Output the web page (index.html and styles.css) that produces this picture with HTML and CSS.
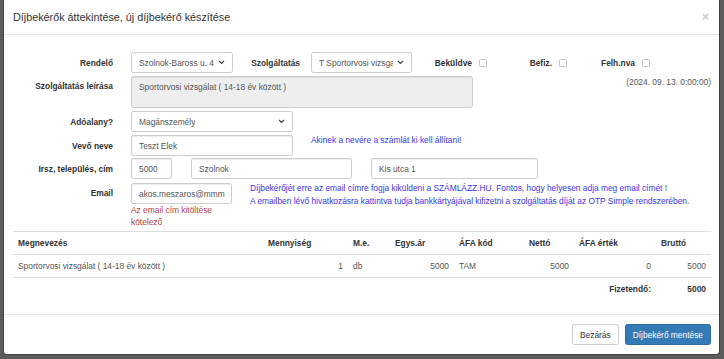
FILE: index.html
```html
<!DOCTYPE html>
<html lang="hu">
<head>
    <meta charset="UTF-8">
    <title>Díjbekérők</title>
    <link rel="stylesheet" href="styles.css">
</head>
<body>
<div class="modal">
    <div class="modal-header">
        <h4 class="modal-title">Díjbekérők áttekintése, új díjbekérő készítése</h4>
        <span class="close">×</span>
    </div>
    <div class="modal-body">
        <div class="form-row row-top">
            <label class="lbl">Rendelő</label>
            <div class="select w-rendelo"><span>Szolnok-Baross u. 4</span><svg width="7" height="5" viewBox="0 0 7 5"><path d="M1 1l2.5 2.5L6 1" fill="none" stroke="#444" stroke-width="1.2"/></svg></div>
            <label class="lbl lbl-szolg">Szolgáltatás</label>
            <div class="select w-szolg"><span>T Sportorvosi vizsga</span><svg width="7" height="5" viewBox="0 0 7 5"><path d="M1 1l2.5 2.5L6 1" fill="none" stroke="#444" stroke-width="1.2"/></svg></div>
            <label class="lbl lbl-bekuldve">Beküldve</label><span class="check"></span>
            <label class="lbl lbl-befiz">Befiz.</label><span class="check"></span>
            <label class="lbl lbl-felh">Felh.nva</label><span class="check"></span>
        </div>

        <div class="form-row row-leiras">
            <label class="lbl">Szolgáltatás leírása</label>
            <div class="textarea">Sportorvosi vizsgálat ( 14-18 év között )</div>
            <span class="date">(2024. 09. 13. 0:00:00)</span>
        </div>

        <div class="form-row">
            <label class="lbl">Adóalany?</label>
            <div class="select w-wide"><span>Magánszemély</span><svg width="7" height="5" viewBox="0 0 7 5"><path d="M1 1l2.5 2.5L6 1" fill="none" stroke="#444" stroke-width="1.2"/></svg></div>
        </div>

        <div class="form-row row-vevo">
            <label class="lbl">Vevő neve</label>
            <div class="input w-wide">Teszt Elek</div>
            <span class="hint hint-vevo">Akinek a nevére a számlát ki kell állítani!</span>
        </div>

        <div class="form-row">
            <label class="lbl">Irsz, település, cím</label>
            <div class="input w-irsz">5000</div>
            <div class="input w-telep">Szolnok</div>
            <div class="input w-cim">Kis utca 1</div>
        </div>

        <div class="form-row row-email">
            <label class="lbl">Email</label>
            <div class="email-col">
                <div class="input w-email">akos.meszaros@mmm</div>
                <div class="error">Az email cím kitöltése kötelező</div>
            </div>
            <div class="hint hint-email">
                Díjbekérőjét erre az email címre fogja kiküldeni a SZÁMLÁZZ.HU. Fontos, hogy helyesen adja meg email címét !<br>
                A emailben lévő hivatkozásra kattintva tudja bankkártyájával kifizetni a szolgáltatás díját az OTP Simple rendszerében.
            </div>
        </div>

        <table class="items">
            <colgroup>
                <col style="width:250px"><col style="width:85px"><col style="width:42px"><col style="width:64px">
                <col style="width:70px"><col style="width:50px"><col style="width:82px"><col style="width:55px">
            </colgroup>
            <thead>
            <tr>
                <th>Megnevezés</th>
                <th>Mennyiség</th>
                <th>M.e.</th>
                <th>Egys.ár</th>
                <th>ÁFA kód</th>
                <th>Nettó</th>
                <th>ÁFA érték</th>
                <th>Bruttó</th>
            </tr>
            </thead>
            <tbody>
            <tr>
                <td>Sportorvosi vizsgálat ( 14-18 év között )</td>
                <td class="num">1</td>
                <td>db</td>
                <td class="num">5000</td>
                <td>TAM</td>
                <td class="num">5000</td>
                <td class="num">0</td>
                <td class="num">5000</td>
            </tr>
            <tr class="total">
                <td colspan="6"></td>
                <td class="num">Fizetendő:</td>
                <td class="num">5000</td>
            </tr>
            </tbody>
        </table>
    </div>
    <div class="modal-footer">
        <span class="btn btn-default">Bezárás</span>
        <span class="btn btn-primary">Díjbekérő mentése</span>
    </div>
</div>
</body>
</html>
```

FILE: styles.css
```css
html, body{
    margin: 0;
    height: 100%;
}
body{
    background-color: #5c5c5c;
    font: 8.4px/12px "Liberation Sans", Arial, sans-serif;
    color: #333;
    padding: 0 4px 0 3px;
    box-sizing: border-box;
}

.modal{
    background-color: #fff;
    height: 355px;
    border: 1px solid #444;
    border-top: 0;
    border-radius: 0 0 4px 4px;
    box-sizing: border-box;
    display: flex;
    flex-direction: column;
}

.modal-header{
    height: 35px;
    padding: 0 9px;
    border-bottom: 1px solid #e5e5e5;
    box-sizing: border-box;
    display: flex;
    align-items: center;
    justify-content: space-between;
}
.modal-title{
    margin: 0;
    font-size: 10.8px;
    font-weight: normal;
    line-height: 15px;
}
.close{
    font-size: 12.6px;
    font-weight: bold;
    color: #000;
    opacity: 0.2;
    margin-right: 1px;
}

.modal-body{
    flex: 1;
    padding: 17px 9px 0 9px;
}

.form-row{
    display: flex;
    align-items: center;
    margin-bottom: 3px;
}
.lbl{
    width: 100px;
    margin-right: 18px;
    text-align: right;
    font-weight: bold;
    flex-shrink: 0;
}

.select, .input, .textarea{
    height: 21px;
    border: 1px solid #ccc;
    border-radius: 2.4px;
    box-sizing: border-box;
    padding: 0 7px;
    color: #555;
    display: flex;
    align-items: center;
    white-space: nowrap;
    overflow: hidden;
    box-shadow: inset 0 1px 1px rgba(0, 0, 0, 0.075);
    flex-shrink: 0;
}
.select{
    justify-content: space-between;
    box-shadow: none;
}
.select span{
    overflow: hidden;
    margin-right: 4px;
}
.select svg{
    flex-shrink: 0;
}

.w-rendelo{ width: 102px; }
.w-szolg{ width: 101px; }
.w-wide{ width: 162px; }
.w-irsz{ width: 41px; }
.w-telep{ width: 161px; margin-left: 19px; }
.w-cim{ width: 167px; margin-left: 19px; }
.w-email{ width: 101px; }

.lbl-szolg{ width: 67px; margin: 0 11px 0 0; }
.lbl-bekuldve{ width: 60px; margin: 0 7px 0 0; }
.lbl-befiz{ width: 65px; margin: 0 7px 0 0; }
.lbl-felh{ width: 68px; margin: 0 7px 0 0; }

.check{
    width: 8px;
    height: 8px;
    border: 1px solid #c4c4c4;
    border-radius: 1.5px;
    box-sizing: border-box;
    flex-shrink: 0;
}

.row-leiras{
    align-items: flex-start;
}
.row-leiras .lbl{
    padding-top: 4px;
}
.textarea{
    width: 342px;
    height: 32px;
    align-items: flex-start;
    padding-top: 4px;
    background-color: #eee;
}
.date{
    margin-left: auto;
    margin-right: -1px;
    color: #555;
}

.row-vevo{
    margin-bottom: 2px;
}
.hint{
    color: #3838ec;
}
.hint-vevo{
    align-self: flex-start;
    margin: -1px 0 0 18px;
}

.row-email{
    align-items: flex-start;
    margin-top: 4px;
}
.row-email .lbl{
    padding-top: 4px;
}
.error{
    width: 101px;
    color: #b0443f;
}
.hint-email{
    margin: -1px 0 0 18px;
    line-height: 13px;
}

.items{
    width: 100%;
    table-layout: fixed;
    border-collapse: collapse;
    margin-top: 2px;
    border-top: 1px solid #ddd;
}
.items th, .items td{
    padding: 5px 5px;
    text-align: left;
    white-space: nowrap;
}
.items th{
    border-bottom: 1px solid #ddd;
}
.items td{
    color: #555;
    border-bottom: 1px solid #ddd;
}
.items .num{
    text-align: right;
}
.items .total td{
    border-bottom: 0;
    color: #333;
    font-weight: bold;
}

.modal-footer{
    height: 39px;
    padding: 0 8px;
    border-top: 1px solid #e5e5e5;
    display: flex;
    align-items: center;
    justify-content: flex-end;
    gap: 6px;
}
.btn{
    height: 21px;
    box-sizing: border-box;
    padding: 0 7px;
    border: 1px solid #ccc;
    border-radius: 2.4px;
    display: flex;
    align-items: center;
}
.btn-default{
    color: #333;
    background-color: #fff;
}
.btn-primary{
    color: #fff;
    background-color: #337ab7;
    border-color: #2e6da4;
}
```
